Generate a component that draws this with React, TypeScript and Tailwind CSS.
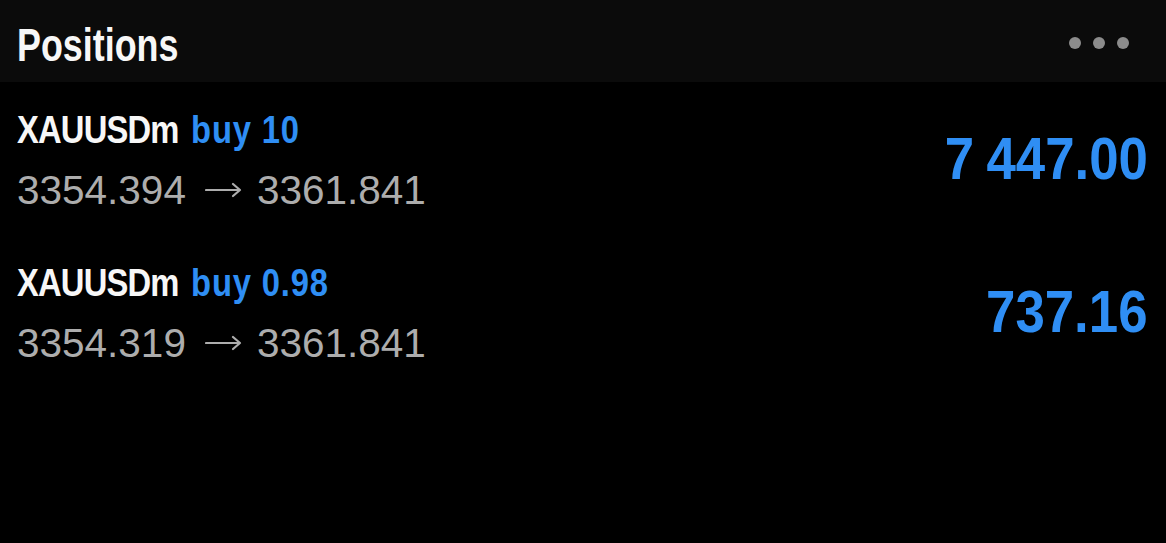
const positions = [
  { symbol: "XAUUSDm", side: "buy", volume: "10", open: "3354.394", current: "3361.841", profit: ["7", "447.00"] },
  { symbol: "XAUUSDm", side: "buy", volume: "0.98", open: "3354.319", current: "3361.841", profit: ["737.16"] },
];

function Arrow() {
  return (
    <svg width="37" height="16" viewBox="0 0 37 16" className="ml-[19px] mr-[15px]" fill="none">
      <path d="M1 8h34M28 2l7 6-7 6" stroke="#adadad" strokeWidth="2.2" strokeLinecap="round" strokeLinejoin="round" />
    </svg>
  );
}

export default function App() {
  return (
    <div className="w-[1166px] h-[543px] bg-black overflow-hidden">
      <header className="h-[82px] bg-[#0b0b0b] flex items-start justify-between pl-[17px] pr-[37px]">
        <h1 className="mt-[22px] origin-left scale-x-[0.78] text-[#f7f7f7] text-[46px] font-bold leading-none font-['Liberation_Sans',Arial,sans-serif]">
          Positions
        </h1>
        <div className="mt-[37px] flex items-center gap-[12px]">
          <span className="w-[12px] h-[12px] rounded-full bg-[#8c8c8c]" />
          <span className="w-[12px] h-[12px] rounded-full bg-[#8c8c8c]" />
          <span className="w-[12px] h-[12px] rounded-full bg-[#8c8c8c]" />
        </div>
      </header>
      <div className="flex flex-col">
        {positions.map((p, i) => (
          <div key={i} className="h-[153px] flex items-start justify-between pl-[17px] pr-[18px]">
            <div className="pt-[28px] flex flex-col">
              <div className="origin-left scale-x-[0.84] whitespace-nowrap text-[39px] font-bold leading-none font-['Liberation_Sans',Arial,sans-serif]">
                <span className="text-[#f7f7f7] tracking-[-1px]">{p.symbol}</span>{" "}
                <span className="ml-[4px] tracking-[1px] text-[#2f8ef4]">
                  {p.side} {p.volume}
                </span>
              </div>
              <div className="mt-[21px] flex items-center text-[40.5px] leading-none text-[#adadad] font-['Liberation_Sans',Arial,sans-serif]">
                <span>{p.open}</span>
                <Arrow />
                <span>{p.current}</span>
              </div>
            </div>
            <div className="pt-[47px] origin-right scale-x-[0.88] flex gap-[14px] text-[#2f8ef4] text-[60px] font-bold leading-none font-['Liberation_Sans',Arial,sans-serif]">
              {p.profit.map((part, j) => (
                <span key={j}>{part}</span>
              ))}
            </div>
          </div>
        ))}
      </div>
    </div>
  );
}
